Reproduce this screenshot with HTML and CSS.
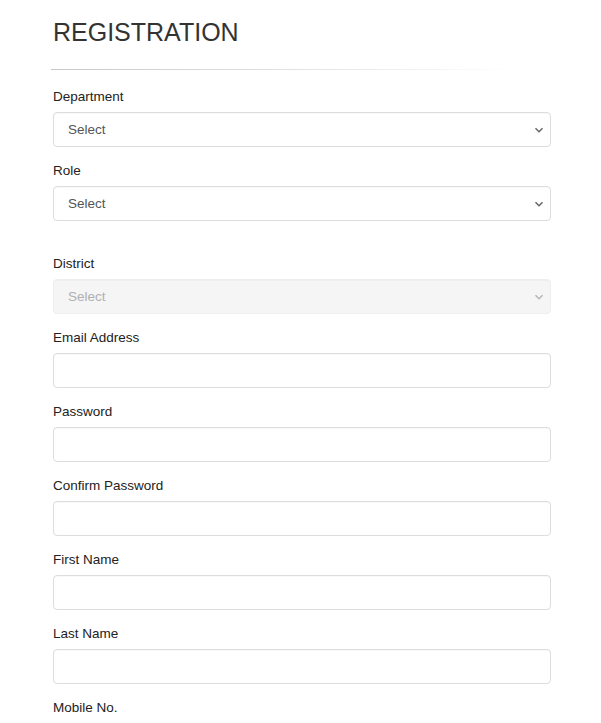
FILE: index.html
```html
<!DOCTYPE html>
<html>
<head>
<meta charset="utf-8">
<link rel="stylesheet" href="styles.css">
</head>
<body>
<div class="page">
  <h2 class="title">REGISTRATION</h2>
  <hr class="rule">
  <form class="form">
    <div class="group">
      <label class="label">Department</label>
      <div class="select"><span class="select-text">Select</span><svg class="chev" width="10" height="6" viewBox="0 0 10 6"><path d="M1.5 1.2l3.5 3.5 3.5-3.5" fill="none" stroke="#666" stroke-width="1.5"/></svg></div>
    </div>
    <div class="group">
      <label class="label">Role</label>
      <div class="select"><span class="select-text">Select</span><svg class="chev" width="10" height="6" viewBox="0 0 10 6"><path d="M1.5 1.2l3.5 3.5 3.5-3.5" fill="none" stroke="#666" stroke-width="1.5"/></svg></div>
    </div>
    <div class="group group-gap">
      <label class="label">District</label>
      <div class="select disabled"><span class="select-text">Select</span><svg class="chev" width="10" height="6" viewBox="0 0 10 6"><path d="M1.5 1.2l3.5 3.5 3.5-3.5" fill="none" stroke="#b5b5b5" stroke-width="1.5"/></svg></div>
    </div>
    <div class="group">
      <label class="label">Email Address</label>
      <div class="input"></div>
    </div>
    <div class="group">
      <label class="label">Password</label>
      <div class="input"></div>
    </div>
    <div class="group">
      <label class="label">Confirm Password</label>
      <div class="input"></div>
    </div>
    <div class="group">
      <label class="label">First Name</label>
      <div class="input"></div>
    </div>
    <div class="group">
      <label class="label">Last Name</label>
      <div class="input"></div>
    </div>
    <div class="group">
      <label class="label">Mobile No.</label>
      <div class="input"></div>
    </div>
  </form>
</div>
</body>
</html>
```
FILE: styles.css
```css
html, body {
  margin: 0;
  padding: 0;
  background: #fff;
  overflow: hidden;
}
body {
  font-family: "Liberation Sans", Arial, sans-serif;
  font-size: 13.5px;
  line-height: 20px;
  color: #222;
}
.page {
  padding: 0 50px 0 53px;
}
.title {
  margin: 0;
  padding-top: 18px;
  font-size: 25px;
  line-height: 28px;
  font-weight: normal;
  color: #333;
}
.rule {
  margin: 23px 0 16px -2px;
  width: 460px;
  height: 1px;
  border: 0;
  background: linear-gradient(to right, #c8c8c8, #e6e6e6 60%, rgba(240,240,240,0));
}
.form {
  display: flex;
  flex-direction: column;
  padding-top: 1px;
}
.group {
  display: flex;
  flex-direction: column;
  margin-bottom: 14px;
}
.group-gap {
  margin-top: 19px;
}
.label {
  display: block;
  height: 20px;
  margin-bottom: 5px;
  color: #222;
}
.select, .input {
  box-sizing: border-box;
  height: 35px;
  border: 1px solid #ddd;
  border-radius: 4px;
  background: #fff;
  box-shadow: inset 0 1px 1px rgba(0,0,0,0.03);
}
.select {
  display: flex;
  align-items: center;
  justify-content: space-between;
  padding: 0 6px 0 14px;
  color: #555;
}
.select-text {
  font-size: 13.5px;
}
.select.disabled {
  background: #f5f5f5;
  border-color: #eee;
  color: #b0b0b0;
}
.chev {
  display: block;
}
```
